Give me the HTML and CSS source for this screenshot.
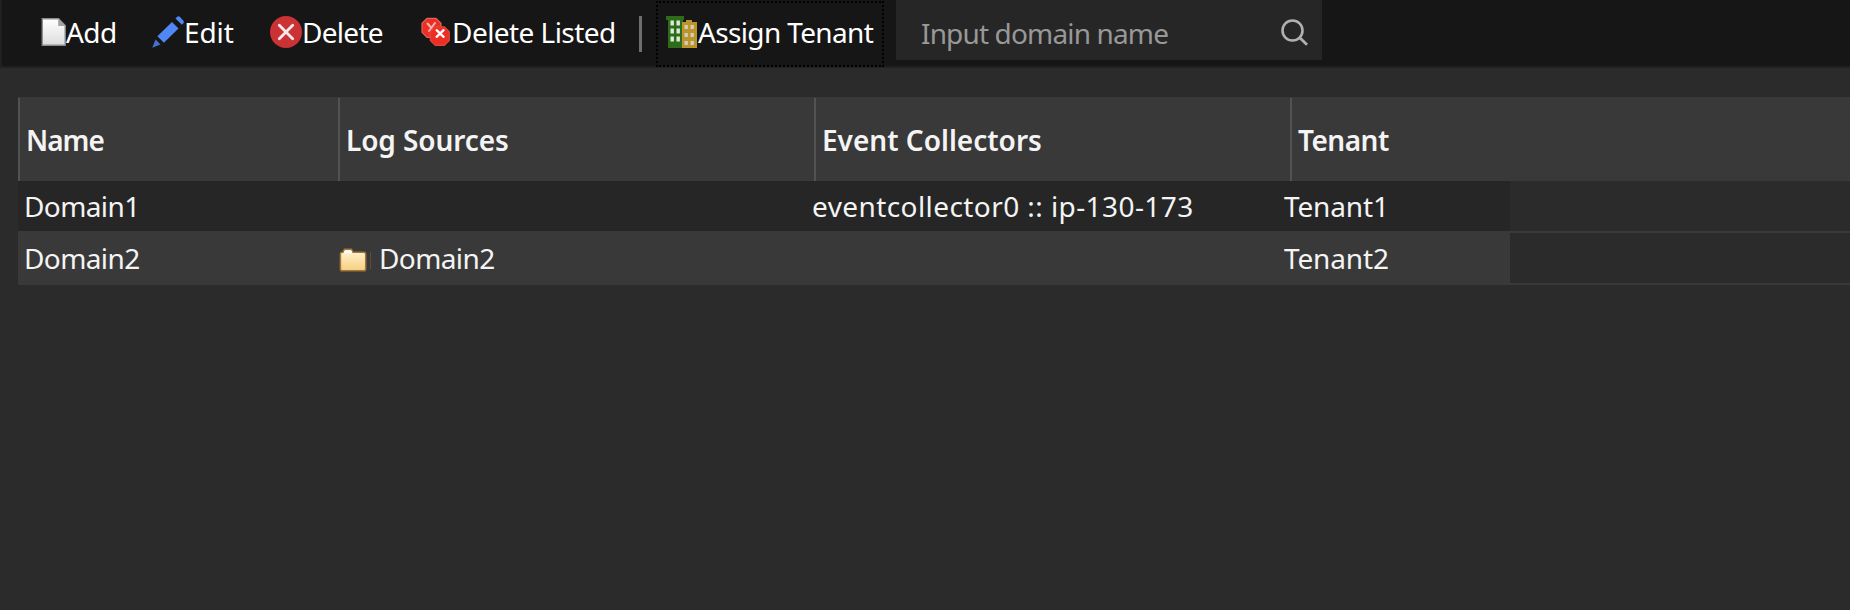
FILE: index.html
```
<!DOCTYPE html>
<html lang="en">
<head>
    <meta charset="UTF-8">
    <meta name="viewport" content="width=device-width, initial-scale=1.0">
    <title>Domain Management</title>
    <link rel="stylesheet" href="styles.css">
</head>
<body>
    <div class="toolbar">
        <div class="tool tool-add">
            <svg class="icon" viewBox="0 0 32 32">
                <defs>
                    <linearGradient id="paper" x1="0" y1="0" x2="0" y2="1">
                        <stop offset="0" stop-color="#ffffff"/>
                        <stop offset="1" stop-color="#dcdcdc"/>
                    </linearGradient>
                </defs>
                <path d="M8.3 2.8h16.2l6.7 6.7v19.7H8.3z" fill="url(#paper)" stroke="#8d8d8d" stroke-width="1.4"/>
                <path d="M24.2 3l7 7h-7z" fill="#a3a3a3"/>
            </svg>
            <span>Add</span>
        </div>
        <div class="tool tool-edit">
            <svg class="icon" viewBox="0 0 32 32" fill="#5087f5">
                <path d="M20 6l6.5 6.5-14.6 14.3-6.5-6.5z"/>
                <path d="M25.2 0.7q1.4-1 2.6 0l3.6 4q1 1.3 0 2.6l-1.5 1.5-6.4-6.4z"/>
                <path d="M3.6 23.6l4.9 4.9-8.3 3.3z" fill="#4372cd"/>
            </svg>
            <span>Edit</span>
        </div>
        <div class="tool tool-delete">
            <svg class="icon" viewBox="0 0 32 32">
                <circle cx="16" cy="16" r="16" fill="#cb3236"/>
                <path d="M9.3 9.3l13.4 13.4M22.7 9.3L9.3 22.7" stroke="#fbe9e9" stroke-width="2.8" stroke-linecap="round"/>
            </svg>
            <span>Delete</span>
        </div>
        <div class="tool tool-listed">
            <svg class="icon" viewBox="0 0 32 32">
                <path d="M7 2.3h9l5 5v9l-5 5H7l-5-5v-9z" fill="#ed2e24" stroke="#d8655e" stroke-width="1.2"/>
                <path d="M7.5 7.5l4 4.5M15 7l-6 8" stroke="#f5b3ae" stroke-width="2" stroke-linecap="round"/>
                <path d="M15.3 10.8h9l5 5v8.6l-5 5h-9l-5-5v-8.6z" fill="#ed2e24" stroke="#e2463d" stroke-width="1.2"/>
                <path d="M16.6 14.2l7 6.6M23.6 14.2l-7 6.6" stroke="#fff" stroke-width="2.3" stroke-linecap="round"/>
            </svg>
            <span>Delete Listed</span>
        </div>
        <div class="separator"></div>
        <div class="tool tool-assign focused">
            <svg class="icon" viewBox="0 0 32 32">
                <path d="M0 0h18v4h-1v28H2V4H0z" fill="#2e6b1a"/>
                <path d="M16 6h4V4h6v2h5v26H16z" fill="#bd9427"/>
                <g fill="#dcecd8">
                    <rect x="4.5" y="4.5" width="3.4" height="5"/>
                    <rect x="10.5" y="4.5" width="3.4" height="5"/>
                    <rect x="4.5" y="12.5" width="3.4" height="5"/>
                    <rect x="10.5" y="12.5" width="3.4" height="5"/>
                    <rect x="4.5" y="20.5" width="3.4" height="5"/>
                    <rect x="10.5" y="20.5" width="3.4" height="5"/>
                </g>
                <g fill="#cfccc4">
                    <rect x="18.5" y="9" width="3.4" height="4"/>
                    <rect x="24.5" y="9" width="3.4" height="4"/>
                    <rect x="18.5" y="17" width="3.4" height="4"/>
                    <rect x="24.5" y="17" width="3.4" height="4"/>
                    <rect x="18.5" y="25" width="3.4" height="4"/>
                    <rect x="24.5" y="25" width="3.4" height="4"/>
                </g>
            </svg>
            <span>Assign Tenant</span>
        </div>
        <div class="search">
            <input type="text" placeholder="Input domain name">
            <svg class="search-icon" viewBox="0 0 28 28" fill="none" stroke="#b0b0b0">
                <circle cx="11.5" cy="11.5" r="10" stroke-width="2.6"/>
                <path d="M18.8 18.8l7.2 7" stroke-width="2.8"/>
            </svg>
        </div>
    </div>

    <div class="grid">
        <div class="grid-header">
            <div class="col-name">Name</div>
            <div class="col-sources">Log Sources</div>
            <div class="col-collectors">Event Collectors</div>
            <div class="col-tenant">Tenant</div>
        </div>
        <div class="line">
            <div class="row">
                <div class="cell domain">Domain1</div>
                <div class="cell"></div>
                <div class="cell collector">eventcollector0 :: ip-130-173</div>
                <div class="cell tenant">Tenant1</div>
            </div>
        </div>
        <div class="line">
            <div class="row selected">
                <div class="cell domain">Domain2</div>
                <div class="cell source">
                    <svg class="folder" viewBox="0 0 34 28">
                        <defs>
                            <linearGradient id="folder" x1="0" y1="0" x2="0" y2="1">
                                <stop offset="0" stop-color="#fff5d6"/>
                                <stop offset="1" stop-color="#f6cf7d"/>
                            </linearGradient>
                        </defs>
                        <path d="M1.4 23V8q0-1.8 1.8-1.8h.8l1.4-2.9h7l1.6 3h10.8q1.9 0 1.9 1.9V23q0 1.8-1.8 1.8H3.2Q1.4 24.8 1.4 23z" fill="url(#folder)" stroke="#a0763a" stroke-width="1.5"/>
                        <path d="M5.4 6h7.4" stroke="#fff" stroke-width="2.6"/>
                        <path d="M31.5 6v17" stroke="#5d4d38" stroke-width="1"/>
                    </svg>
                    <span>Domain2</span>
                </div>
                <div class="cell collector"></div>
                <div class="cell tenant">Tenant2</div>
            </div>
        </div>
    </div>
</body>
</html>
```
FILE: styles.css
```
* {
    box-sizing: border-box;
}
body {
    margin: 0;
    height: 610px;
    overflow: hidden;
    background: #2b2b2b;
    color: #f4f4f4;
    font-family: "Noto Sans", "Liberation Sans", sans-serif;
    font-size: 28px;
    white-space: nowrap;
}
.toolbar {
    display: flex;
    height: 68px;
    padding-left: 32px;
    background: #161616;
    border-left: 2px solid #202020;
    border-bottom: 2px solid #202020;
    color: #fff;
}
.tool {
    display: flex;
    align-items: center;
    height: 66px;
    padding-bottom: 2px;
}
.icon {
    flex: none;
    width: 32px;
    height: 32px;
}
.tool-add {
    width: 118px;
    letter-spacing: -0.6px;
}
.tool-edit {
    width: 118px;
    letter-spacing: -0.1px;
}
.tool-delete {
    width: 150px;
    letter-spacing: -0.7px;
}
.tool-listed {
    width: 219px;
    letter-spacing: -0.55px;
}
.tool-assign {
    width: 228px;
    padding-left: 8px;
    letter-spacing: -0.65px;
}
.focused {
    height: 66px;
    margin-top: 1px;
    padding-bottom: 4px;
    border: 2px dotted #000;
}
.separator {
    width: 3px;
    height: 36px;
    margin: 16px 14px 0 0;
    background: #6f6f6f;
}
.search {
    display: flex;
    align-items: center;
    width: 426px;
    height: 60px;
    margin-left: 12px;
    background: #262626;
}
.search input {
    width: 385px;
    height: 60px;
    padding: 5px 0 0 25px;
    border: 0;
    outline: 0;
    background: none;
    color: #f4f4f4;
    font: inherit;
    letter-spacing: -0.85px;
}
.search input::placeholder {
    color: #989898;
}
.search-icon {
    width: 28px;
    height: 28px;
    margin-top: 5px;
}
.grid {
    margin: 29px 0 0 18px;
}
.grid-header {
    display: grid;
    grid-template-columns: 320px 476px 476px 1fr;
    height: 84px;
    background: #393939;
    font-weight: 600;
}
.grid-header div {
    height: 83px;
    margin-top: 1px;
    padding-left: 6px;
    border-left: 2px solid #525252;
    line-height: 84px;
}
.col-name {
    letter-spacing: -1px;
}
.col-sources {
    letter-spacing: -0.1px;
}
.col-tenant {
    letter-spacing: -0.5px;
}
.line {
    height: 52px;
    border-bottom: 2px solid #393939;
}
.row {
    display: grid;
    grid-template-columns: 320px 473px 472px 1fr;
    width: 1492px;
    height: 50px;
    background: #262626;
    line-height: 51px;
}
.selected {
    background: #393939;
}
.cell {
    height: 50px;
}
.domain {
    padding-left: 6px;
    letter-spacing: -0.6px;
}
.source {
    display: flex;
    align-items: center;
    letter-spacing: -0.6px;
}
.folder {
    width: 34px;
    height: 28px;
    margin: 3px 6px 0 1px;
}
.collector {
    padding-left: 1px;
    letter-spacing: 0.42px;
}
.tenant {
    padding-left: 1px;
    letter-spacing: -0.15px;
}
```
